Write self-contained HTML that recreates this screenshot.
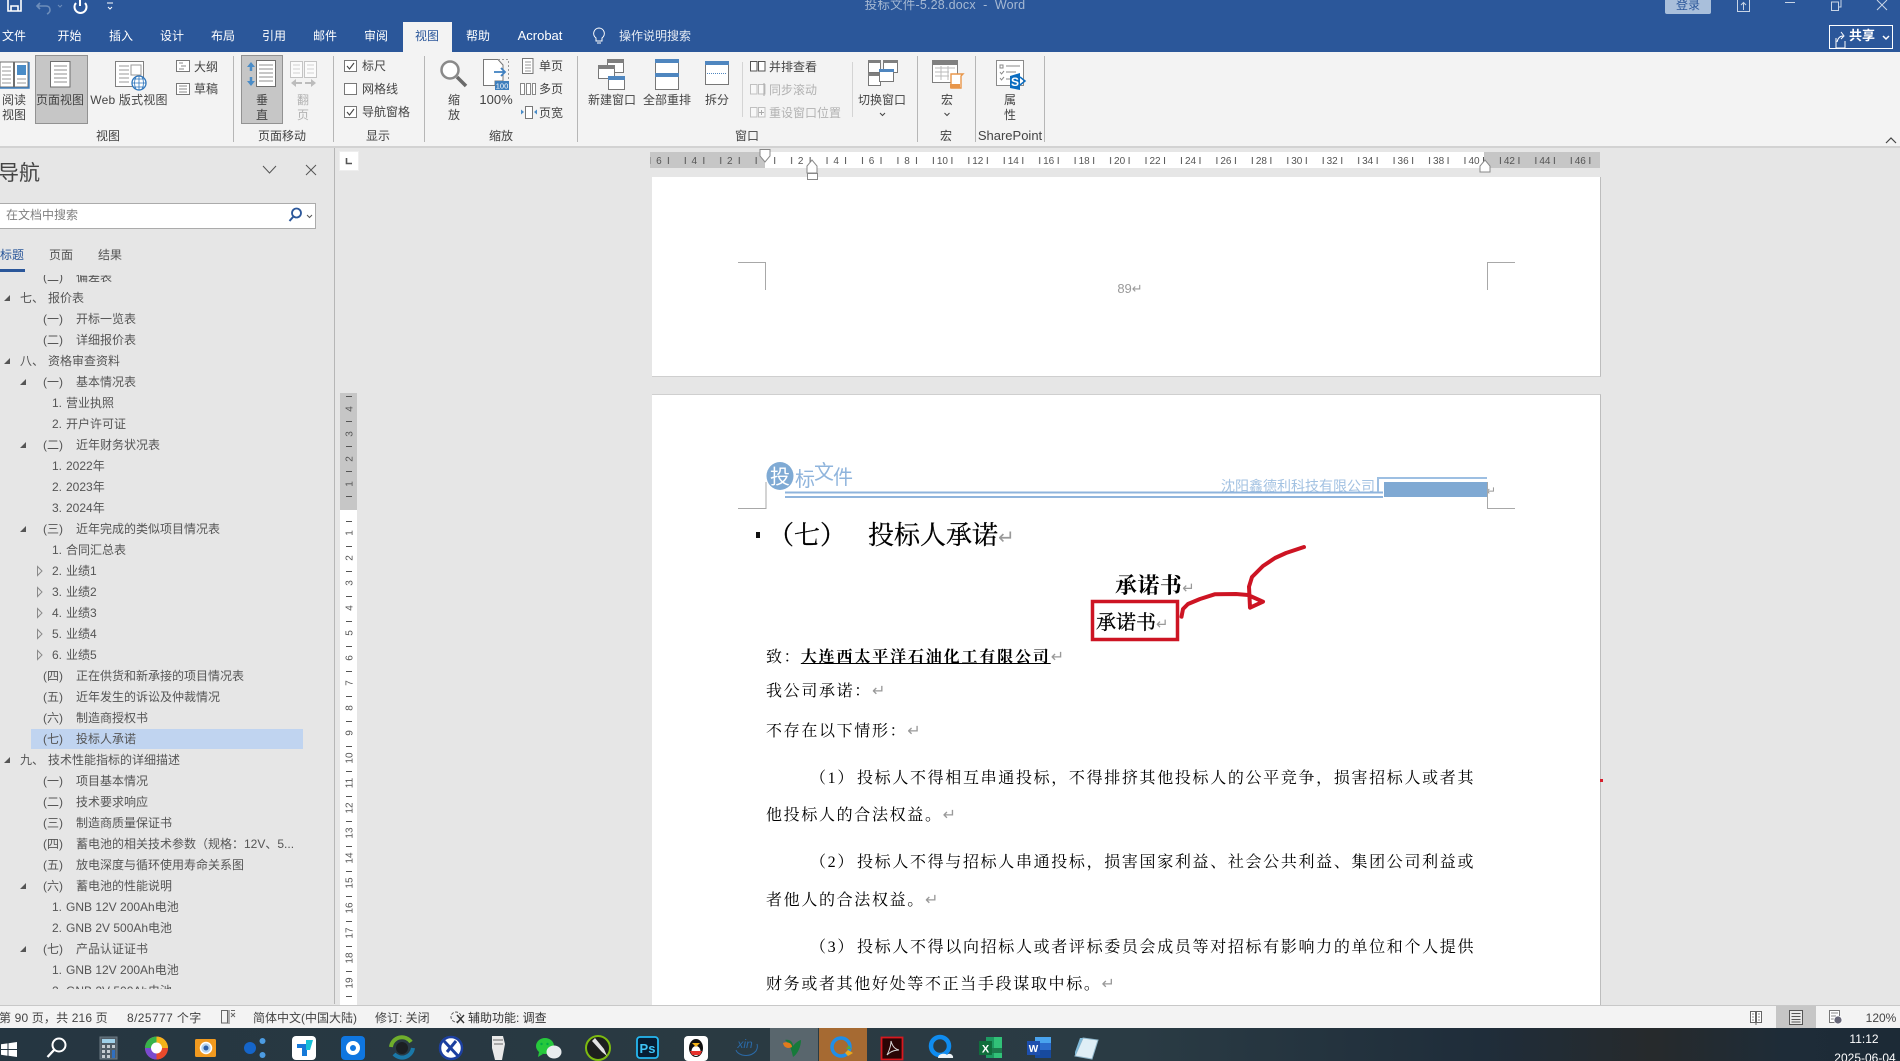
<!DOCTYPE html>
<html lang="zh"><head><meta charset="utf-8"><title>投标文件-5.28.docx - Word</title>
<style>
html,body{margin:0;padding:0;background:#e6e6e6}
#w{position:relative;width:1900px;height:1061px;overflow:hidden;background:#e6e6e6;font:12px/16px "Liberation Sans","Noto Sans CJK SC",sans-serif;color:#444}
.box{position:absolute}
.c,.l{position:absolute;white-space:nowrap}
.c{transform:translate(-50%,-50%)}
.l{transform:translateY(-50%)}
.tab{color:#fff}
.g{color:#b2b2b2}
.n{position:absolute;left:0;top:calc(1.7px + 21px*var(--k));height:0;color:#555}
.n b{position:absolute;font-weight:400;white-space:nowrap;transform:translateY(-50%)}
.s{font-family:"Liberation Serif","Noto Serif CJK SC",serif;color:#000;letter-spacing:1.66px;font-size:16px;line-height:20px}
svg{position:absolute;left:0;top:0}
.ret{color:#999;font:16px/14px "DejaVu Sans",sans-serif;letter-spacing:0}
</style></head><body><div id="w">

<!-- title + tabs -->
<div class="box" style="left:0;top:0;width:1900px;height:52px;background:#2b579a"></div>
<div class="box" style="left:403px;top:22px;width:49px;height:30px;background:#f3f3f3"></div>
<div class="box" style="left:0;top:52px;width:1900px;height:94px;background:#f3f3f3"></div>
<div class="box" style="left:0;top:146px;width:1900px;height:2px;background:#d2d2d2"></div>
<div class="box" style="left:1665px;top:0;width:46px;height:14px;background:#a9bfdb;border-radius:0 0 2px 2px"></div>
<div class="box" style="left:1829px;top:25px;width:62px;height:22px;border:1px solid #fff"></div>

<!-- selected ribbon buttons -->
<div class="box" style="left:35px;top:55px;width:51px;height:67px;background:#c6c6c6;border:1px solid #929292"></div>
<div class="box" style="left:241px;top:55px;width:40px;height:67px;background:#c6c6c6;border:1px solid #929292"></div>

<!-- nav pane -->
<div class="box" style="left:334px;top:148px;width:1px;height:856px;background:#b6b6b6"></div>
<div class="box" style="left:-2px;top:203px;width:316px;height:24px;background:#fff;border:1px solid #ababab"></div>
<div class="box" style="left:0;top:269px;width:25px;height:3px;background:#2b579a"></div>

<!-- rulers -->
<div class="box" style="left:340px;top:152px;width:18px;height:18px;background:#fff;box-shadow:0 0 0 1px #eee"></div>
<div class="box" style="left:650px;top:152px;width:950px;height:16px;background:#c6c6c6"></div>
<div class="box" style="left:765px;top:152px;width:719px;height:16px;background:#fff"></div>
<div class="box" style="left:340px;top:393px;width:17px;height:613px;background:#fff"></div>
<div class="box" style="left:340px;top:393px;width:17px;height:117px;background:#c6c6c6"></div>

<!-- pages -->
<div class="box" style="left:652px;top:177px;width:948px;height:199px;background:#fff;border-right:1px solid #bdbdbd;border-bottom:1px solid #cfcfcf"></div>
<div class="box" style="left:652px;top:394px;width:948px;height:612px;background:#fff;border-right:1px solid #bdbdbd;border-top:1px solid #cfcfcf"></div>
<div class="box" style="left:1600px;top:779px;width:3px;height:3px;background:#d81e2c"></div>

<!-- status + taskbar -->
<div class="box" style="left:0;top:1005px;width:1900px;height:1px;background:#c8c8c8"></div>
<div class="box" style="left:0;top:1006px;width:1900px;height:22px;background:#f3f3f3"></div>
<div class="box" style="left:1776px;top:1006px;width:40px;height:22px;background:#c6c6c6"></div>
<div class="box" style="left:0;top:1028px;width:1900px;height:33px;background:linear-gradient(90deg,#253641 0,#2a3a42 40%,#2a3b44 60%,#1f2d3a 78%,#262a2c 87%,#1e2c38 94%,#1c2a36 100%)"></div>
<div class="box" style="left:770px;top:1028px;width:48px;height:33px;background:#59666d"></div>
<div class="box" style="left:819px;top:1028px;width:48px;height:33px;background:#a66a32"></div>

<!-- nav tree highlight -->
<div class="box" style="left:31px;top:729px;width:272px;height:20px;background:#c0d4f0"></div>

<!-- tab labels -->
<span class="c tab" style="left:14px;top:36px">文件</span>
<span class="c tab" style="left:69.500px;top:36px">开始</span>
<span class="c tab" style="left:121px;top:36px">插入</span>
<span class="c tab" style="left:172px;top:36px">设计</span>
<span class="c tab" style="left:223px;top:36px">布局</span>
<span class="c tab" style="left:274px;top:36px">引用</span>
<span class="c tab" style="left:325px;top:36px">邮件</span>
<span class="c tab" style="left:376px;top:36px">审阅</span>
<span class="c" style="left:427px;top:36px;color:#2b579a">视图</span>
<span class="c tab" style="left:478px;top:36px">帮助</span>
<span class="c tab" style="left:540px;top:36px;font-size:13px">Acrobat</span>
<span class="l tab" style="left:619px;top:36px;color:#e4eaf3">操作说明搜索</span>
<span class="c" style="left:945px;top:5px;color:#a6b9d3;font-size:12.500px;letter-spacing:.2px">投标文件-5.28.docx &nbsp;-&nbsp; Word</span>
<span class="c" style="left:1688px;top:5px;color:#2b579a">登录</span>
<span class="c" style="left:1862px;top:36px;color:#fff;font-weight:700;font-size:13px">共享</span>

<!-- ribbon labels -->
<span class="c" style="left:14px;top:100px">阅读</span><span class="c" style="left:14px;top:115px">视图</span>
<span class="c" style="left:60px;top:100px">页面视图</span>
<span class="c" style="left:129px;top:100px;letter-spacing:.2px">Web 版式视图</span>
<span class="l" style="left:194px;top:67px">大纲</span><span class="l" style="left:194px;top:89px">草稿</span>
<span class="c" style="left:262px;top:100px">垂</span><span class="c" style="left:262px;top:115px">直</span>
<span class="c g" style="left:303px;top:100px">翻</span><span class="c g" style="left:303px;top:115px">页</span>
<span class="l" style="left:362px;top:66px">标尺</span><span class="l" style="left:362px;top:89px">网格线</span><span class="l" style="left:362px;top:112px">导航窗格</span>
<span class="c" style="left:454px;top:100px">缩</span><span class="c" style="left:454px;top:115px">放</span>
<span class="c" style="left:496px;top:100px;font-size:13px">100%</span>
<span class="l" style="left:539px;top:66px">单页</span><span class="l" style="left:539px;top:89px">多页</span><span class="l" style="left:539px;top:113px">页宽</span>
<span class="c" style="left:612px;top:100px">新建窗口</span>
<span class="c" style="left:667px;top:100px">全部重排</span>
<span class="c" style="left:717px;top:100px">拆分</span>
<span class="l" style="left:769px;top:67px">并排查看</span>
<span class="l g" style="left:769px;top:90px">同步滚动</span>
<span class="l g" style="left:769px;top:113px">重设窗口位置</span>
<span class="c" style="left:882px;top:100px">切换窗口</span>
<span class="c" style="left:947px;top:100px">宏</span>
<span class="c" style="left:1010px;top:100px">属</span><span class="c" style="left:1010px;top:115px">性</span>
<span class="c" style="left:108px;top:136px">视图</span>
<span class="c" style="left:282px;top:136px">页面移动</span>
<span class="c" style="left:378px;top:136px">显示</span>
<span class="c" style="left:501px;top:136px">缩放</span>
<span class="c" style="left:747px;top:136px">窗口</span>
<span class="c" style="left:946px;top:136px">宏</span>
<span class="c" style="left:1010px;top:136px;font-size:13px">SharePoint</span>

<!-- nav head -->
<span class="l" style="left:-2px;top:174px;font-size:21px;line-height:24px;color:#444">导航</span>
<span class="l" style="left:6px;top:215px;color:#808080">在文档中搜索</span>
<span class="l" style="left:0;top:255px;color:#2b579a">标题</span>
<span class="l" style="left:49px;top:255px;color:#555">页面</span>
<span class="l" style="left:98px;top:255px;color:#555">结果</span>

<!-- tree -->
<div class="box" style="left:0;top:275px;width:334px;height:714px;overflow:hidden">
<div class="n" style="--k:0"><b style="left:43px">(二)</b><b style="left:76px">偏差表</b></div>
<div class="n" style="--k:1"><b style="left:20px">七、</b><b style="left:48px">报价表</b></div>
<div class="n" style="--k:2"><b style="left:43px">(一)</b><b style="left:76px">开标一览表</b></div>
<div class="n" style="--k:3"><b style="left:43px">(二)</b><b style="left:76px">详细报价表</b></div>
<div class="n" style="--k:4"><b style="left:20px">八、</b><b style="left:48px">资格审查资料</b></div>
<div class="n" style="--k:5"><b style="left:43px">(一)</b><b style="left:76px">基本情况表</b></div>
<div class="n" style="--k:6"><b style="left:52px">1.</b><b style="left:66px">营业执照</b></div>
<div class="n" style="--k:7"><b style="left:52px">2.</b><b style="left:66px">开户许可证</b></div>
<div class="n" style="--k:8"><b style="left:43px">(二)</b><b style="left:76px">近年财务状况表</b></div>
<div class="n" style="--k:9"><b style="left:52px">1.</b><b style="left:66px">2022年</b></div>
<div class="n" style="--k:10"><b style="left:52px">2.</b><b style="left:66px">2023年</b></div>
<div class="n" style="--k:11"><b style="left:52px">3.</b><b style="left:66px">2024年</b></div>
<div class="n" style="--k:12"><b style="left:43px">(三)</b><b style="left:76px">近年完成的类似项目情况表</b></div>
<div class="n" style="--k:13"><b style="left:52px">1.</b><b style="left:66px">合同汇总表</b></div>
<div class="n" style="--k:14"><b style="left:52px">2.</b><b style="left:66px">业绩1</b></div>
<div class="n" style="--k:15"><b style="left:52px">3.</b><b style="left:66px">业绩2</b></div>
<div class="n" style="--k:16"><b style="left:52px">4.</b><b style="left:66px">业绩3</b></div>
<div class="n" style="--k:17"><b style="left:52px">5.</b><b style="left:66px">业绩4</b></div>
<div class="n" style="--k:18"><b style="left:52px">6.</b><b style="left:66px">业绩5</b></div>
<div class="n" style="--k:19"><b style="left:43px">(四)</b><b style="left:76px">正在供货和新承接的项目情况表</b></div>
<div class="n" style="--k:20"><b style="left:43px">(五)</b><b style="left:76px">近年发生的诉讼及仲裁情况</b></div>
<div class="n" style="--k:21"><b style="left:43px">(六)</b><b style="left:76px">制造商授权书</b></div>
<div class="n" style="--k:22"><b style="left:43px">(七)</b><b style="left:76px">投标人承诺</b></div>
<div class="n" style="--k:23"><b style="left:20px">九、</b><b style="left:48px">技术性能指标的详细描述</b></div>
<div class="n" style="--k:24"><b style="left:43px">(一)</b><b style="left:76px">项目基本情况</b></div>
<div class="n" style="--k:25"><b style="left:43px">(二)</b><b style="left:76px">技术要求响应</b></div>
<div class="n" style="--k:26"><b style="left:43px">(三)</b><b style="left:76px">制造商质量保证书</b></div>
<div class="n" style="--k:27"><b style="left:43px">(四)</b><b style="left:76px">蓄电池的相关技术参数（规格：12V、5...</b></div>
<div class="n" style="--k:28"><b style="left:43px">(五)</b><b style="left:76px">放电深度与循环使用寿命关系图</b></div>
<div class="n" style="--k:29"><b style="left:43px">(六)</b><b style="left:76px">蓄电池的性能说明</b></div>
<div class="n" style="--k:30"><b style="left:52px">1.</b><b style="left:66px">GNB 12V 200Ah电池</b></div>
<div class="n" style="--k:31"><b style="left:52px">2.</b><b style="left:66px">GNB 2V 500Ah电池</b></div>
<div class="n" style="--k:32"><b style="left:43px">(七)</b><b style="left:76px">产品认证证书</b></div>
<div class="n" style="--k:33"><b style="left:52px">1.</b><b style="left:66px">GNB 12V 200Ah电池</b></div>
<div class="n" style="--k:34"><b style="left:52px">2.</b><b style="left:66px">GNB 2V 500Ah电池</b></div>
</div>

<!-- status text -->
<span class="l" style="left:-1px;top:1018px;letter-spacing:.15px">第 90 页，共 216 页</span>
<span class="l" style="left:127px;top:1018px;letter-spacing:.4px">8/25777 个字</span>
<span class="l" style="left:253px;top:1018px">简体中文(中国大陆)</span>
<span class="l" style="left:375px;top:1018px">修订: 关闭</span>
<span class="l" style="left:468px;top:1018px;color:#333">辅助功能: 调查</span>
<span class="c" style="left:1881px;top:1018px">120%</span>
<span class="c" style="left:1864px;top:1039px;color:#fff">11:12</span>
<span class="c" style="left:1865px;top:1058px;color:#fff">2025-06-04</span>

<!-- document text -->
<span class="c" style="left:1130px;top:289px;color:#9a9a9a;font-size:13px">89↵</span>
<span class="c" style="left:805px;top:480px;color:#8fb4dc;font-size:20px;line-height:24px">标</span>
<span class="c" style="left:824px;top:473px;color:#8fb4dc;font-size:20px;line-height:24px">文</span>
<span class="c" style="left:843px;top:478px;color:#8fb4dc;font-size:20px;line-height:24px">件</span>
<span class="l" style="left:1221px;top:486px;color:#a3c2e2;font-size:14px">沈阳鑫德利科技有限公司</span>
<span class="c ret" style="left:1491px;top:491px;font-size:12px">↵</span>

<span class="l s" style="left:768px;top:536px;font-size:26px;line-height:32px;letter-spacing:0;-webkit-text-stroke:.3px #000">（七）</span>
<span class="l s" style="left:868px;top:536px;font-size:26px;line-height:32px;letter-spacing:0;-webkit-text-stroke:.3px #000">投标人承诺<span class="ret" style="font-size:20px;-webkit-text-stroke:0">↵</span></span>
<span class="l s" style="left:1115px;top:586px;font-size:22px;line-height:28px;letter-spacing:.4px;font-weight:700">承诺书<span class="ret" style="font-weight:400;font-size:15px">↵</span></span>
<span class="l s" style="left:1096px;top:623px;font-size:20px;line-height:26px;letter-spacing:0;-webkit-text-stroke:.3px #000">承诺书<span class="ret" style="font-size:15px;-webkit-text-stroke:0">↵</span></span>

<span class="l s" style="left:766px;top:658px">致：<span style="font-weight:700;text-decoration:underline;margin-left:-.5px;letter-spacing:1.85px">大连西太平洋石油化工有限公司</span><span class="ret">↵</span></span>
<span class="l s" style="left:766px;top:692px">我公司承诺：<span class="ret">↵</span></span>
<span class="l s" style="left:766px;top:732px">不存在以下情形：<span class="ret">↵</span></span>
<span class="l s" style="left:810px;top:778.500px">（1）</span>
<span class="l s" style="left:857px;top:778.500px">投标人不得相互串通投标，不得排挤其他投标人的公平竞争，损害招标人或者其</span>
<span class="l s" style="left:766px;top:816px">他投标人的合法权益。<span class="ret">↵</span></span>
<span class="l s" style="left:810px;top:863px">（2）</span>
<span class="l s" style="left:857px;top:863px">投标人不得与招标人串通投标，损害国家利益、社会公共利益、集团公司利益或</span>
<span class="l s" style="left:766px;top:901px">者他人的合法权益。<span class="ret">↵</span></span>
<span class="l s" style="left:810px;top:948px">（3）</span>
<span class="l s" style="left:857px;top:948px">投标人不得以向招标人或者评标委员会成员等对招标有影响力的单位和个人提供</span>
<span class="l s" style="left:766px;top:985px">财务或者其他好处等不正当手段谋取中标。<span class="ret">↵</span></span>

<!-- all vector artwork -->
<svg width="1900" height="1061" viewBox="0 0 1900 1061" fill="none">
<defs>
<pattern id="ht" patternUnits="userSpaceOnUse" x="765.2" y="157" width="35.44" height="7"><rect x="9" width="1" height="7" fill="#555"/><rect x="25.9" width="1" height="7" fill="#555"/></pattern>
<pattern id="vt" patternUnits="userSpaceOnUse" x="346" y="521" width="6" height="25"><rect width="6" height="1" fill="#555"/></pattern>
</defs>

<!-- QAT -->
<path d="M8 0V11H21V0M11 11V6H18V11" stroke="#fff" stroke-width="1.6"/>
<path d="M40 3l-3 3 3 3M37 6h9c3 0 4 2 4 4s-1 3-3 4" stroke="#6d8dba" stroke-width="1.6"/>
<path d="M58 5l2 2 2-2" stroke="#6d8dba"/>
<path d="M76 3a6 6 0 1 0 9 0M80 0v6" stroke="#fff" stroke-width="2"/>
<path d="M107 3h6M108 7l2 2 2-2" stroke="#fff"/>

<!-- bulb -->
<path d="M599 28a5.5 5.5 0 0 1 3 10v3h-6v-3a5.5 5.5 0 0 1 3-10zM597 43h4" stroke="#fff"/>

<!-- window controls -->
<path d="M1737.500 0V11.500H1749.500V0M1743.500 10V3M1741 5l2.500-2.500 2.500 2.500" stroke="#c9d5e6"/>
<path d="M1785 2.500H1795" stroke="#c9d5e6"/>
<path d="M1831.500 2V10.500H1838.500V2zM1838.500 7H1841V0" stroke="#c9d5e6"/>
<path d="M1877 0L1887 10M1887 0L1877 10" stroke="#c9d5e6"/>

<!-- share icon + caret -->
<path d="M1836 38V48H1845V41M1837 42c1-4 3-6 6-6M1841 32l3 4-3 3" stroke="#fff"/>
<path d="M1883 36l3 3 3-3" stroke="#fff" stroke-width="1.5"/>

<!-- read view -->
<path d="M0 62H13.500V87H0z" fill="#fff" stroke="#6f6f6f"/>
<path d="M14.500 62H28V87H14.500z" fill="#fff" stroke="#6f6f6f"/>
<path d="M29 62V88H0" stroke="#3f80c0" stroke-width="1.4"/>
<path d="M2 67H11M2 71H11M2 75H11M2 79H11M2 83H11M17 79H26M17 83H26" stroke="#9a9a9a"/>
<rect x="17" y="65" width="9" height="10" fill="#4a8cc7"/>

<!-- print view -->
<rect x="50.500" y="61.500" width="19.500" height="25.500" fill="#fff" stroke="#6f6f6f"/>
<path d="M54 66H67M54 70H67M54 74H67M54 78H67M54 82H67" stroke="#8f8f8f"/>

<!-- web view -->
<rect x="115.500" y="61.500" width="28" height="25" fill="#fff" stroke="#7f7f7f"/>
<path d="M119 66H129M119 70H129M119 74H129M119 78H129M119 82H129" stroke="#999"/>
<rect x="131" y="65" width="10" height="10" fill="#fff" stroke="#999"/>
<circle cx="139" cy="83" r="7" fill="#fff" stroke="#2f76bc" stroke-width="1.3"/>
<path d="M132 83H146M139 76V90M134 79H144M134 87H144M136 77c-2 4-2 8 0 12M142 77c2 4 2 8 0 12" stroke="#2f76bc" stroke-width=".8"/>

<!-- outline/draft -->
<rect x="176.500" y="60.500" width="13" height="11" fill="#fff" stroke="#777"/>
<path d="M179 63H183M181 66H186M179 69H184" stroke="#888"/>
<rect x="176.500" y="83.500" width="13" height="11" fill="#fff" stroke="#777"/>
<path d="M179 86H187M179 89H187M179 92H187" stroke="#888"/>

<!-- vertical -->
<rect x="256.500" y="60.500" width="19" height="26" fill="#fff" stroke="#6f6f6f"/>
<path d="M259 65H273M259 69H273M259 73H273M259 77H273M259 81H273" stroke="#8f8f8f"/>
<path d="M251 64V71M251 77V84" stroke="#4a8cc7" stroke-width="2.500"/>
<path d="M247 67l4-5 4 5zM247 81l4 5 4-5z" fill="#4a8cc7"/>

<!-- flip pages -->
<rect x="290.500" y="61.500" width="12" height="16" fill="#fbfbfb" stroke="#c4c4c4"/>
<rect x="304.500" y="61.500" width="12" height="16" fill="#fbfbfb" stroke="#c4c4c4"/>
<path d="M293 65H300M293 69H300M293 73H300M307 65H314M307 69H314M307 73H314" stroke="#d2d2d2"/>
<path d="M294 83H302M305 83H313" stroke="#bcbcbc" stroke-width="2"/>
<path d="M291 83l5-4v8zM316 83l-5-4v8z" fill="#bcbcbc"/>

<!-- checkboxes -->
<rect x="344.500" y="60.500" width="12" height="11" fill="#fff" stroke="#777"/>
<path d="M347 66l2.500 3 4.500-6" stroke="#444" stroke-width="1.1"/>
<rect x="344.500" y="83.500" width="12" height="11" fill="#fff" stroke="#777"/>
<rect x="344.500" y="106.500" width="12" height="11" fill="#fff" stroke="#777"/>
<path d="M347 112l2.500 3 4.500-6" stroke="#444" stroke-width="1.1"/>

<!-- zoom -->
<circle cx="450" cy="70" r="8.500" fill="#fff" stroke="#8a8a8a" stroke-width="2.500"/>
<path d="M457 77L466 86" stroke="#6a6a6a" stroke-width="3.500"/>

<!-- 100% -->
<path d="M483.500 59.500H498L503 65V81H495V85.500H483.500z" fill="#fff" stroke="#777"/>
<path d="M498 59.500H508.500V80" stroke="#999" stroke-dasharray="2 2"/>
<path d="M494 72H504M501 68l4 4-4 4" stroke="#3f80c0" stroke-width="1.8"/>
<rect x="495" y="81" width="14" height="9" fill="#3f7fbc"/>
<text x="502" y="88.500" fill="#fff" font-family="Liberation Sans" font-size="7.500" text-anchor="middle">100</text>

<!-- page types -->
<rect x="522.500" y="58.500" width="10.500" height="15" fill="#fff" stroke="#777"/>
<path d="M525 62H531M525 65H531M525 68H531M525 71H531" stroke="#999"/>
<rect x="520.500" y="83.500" width="4" height="11" fill="#fff" stroke="#888"/>
<rect x="526.500" y="83.500" width="4" height="11" fill="#fff" stroke="#888"/>
<rect x="532.500" y="83.500" width="3" height="11" fill="#fff" stroke="#888"/>
<rect x="525.500" y="106.500" width="7" height="12" fill="#fff" stroke="#777"/>
<path d="M524 112l-3-2.500v5zM534 112l3-2.500v5z" fill="#4a8cc7"/>

<!-- new window -->
<rect x="607.500" y="59.500" width="16" height="13" fill="#fff" stroke="#777"/><rect x="607" y="59" width="17" height="4" fill="#7f7f7f"/>
<rect x="598.500" y="65.500" width="16" height="13" fill="#fff" stroke="#777"/><rect x="598" y="65" width="17" height="4" fill="#7f7f7f"/>
<rect x="608.500" y="76.500" width="16" height="13" fill="#fff" stroke="#777"/><rect x="608" y="76" width="17" height="4" fill="#4f86bf"/>

<!-- arrange all -->
<rect x="655.500" y="59.500" width="23" height="30" fill="#fff" stroke="#777"/>
<rect x="655" y="59" width="24" height="4" fill="#4f86bf"/><rect x="655" y="73" width="24" height="4" fill="#4f86bf"/>

<!-- split -->
<rect x="705.500" y="61.500" width="23" height="23" fill="#fff" stroke="#777"/>
<rect x="705" y="61" width="24" height="4" fill="#4f86bf"/>
<path d="M707 73.500H727" stroke="#4f86bf" stroke-dasharray="1 1"/>

<!-- separators -->
<path d="M233.500 56V142M333.500 56V142M424.500 56V142M577.500 56V142M917.500 56V142M975.500 56V142M1044.500 56V142" stroke="#b6b6b6"/>
<path d="M742.500 62V117M852.500 62V117" stroke="#d4d4d4"/>

<!-- side by side -->
<path d="M750.500 61.500H757V71H750.500zM758.500 61.500H765V71H758.500z" fill="#fff" stroke="#555"/>
<path d="M750.500 84.500H757V94H750.500zM758.500 84.500H765V94H758.500z" fill="#f8f8f8" stroke="#c0c0c0"/>
<path d="M764 83V96" stroke="#aaa"/>
<path d="M750.500 107.500H757V117H750.500zM758.500 107.500H765V117H758.500z" fill="#f8f8f8" stroke="#c0c0c0"/>
<path d="M761.500 110V115M759 112.500H764" stroke="#aaa"/>

<!-- switch windows -->
<rect x="868.500" y="60.500" width="12" height="12" fill="#fff" stroke="#777"/><rect x="868" y="60" width="13" height="3" fill="#7f7f7f"/>
<rect x="883.500" y="60.500" width="14" height="12" fill="#fff" stroke="#777"/><rect x="883" y="60" width="15" height="3" fill="#7f7f7f"/>
<rect x="868.500" y="73.500" width="12" height="12" fill="#fff" stroke="#777"/><rect x="868" y="73" width="13" height="3" fill="#7f7f7f"/>
<rect x="879.500" y="69.500" width="14" height="12" fill="#fff" stroke="#777"/><rect x="879" y="69" width="15" height="3" fill="#4f86bf"/>
<path d="M880 113l2.500 2.500 2.500-2.500" stroke="#444"/>

<!-- macro -->
<rect x="932.500" y="60.500" width="25" height="22" fill="#fff" stroke="#7f7f7f"/>
<rect x="932" y="60" width="26" height="5" fill="#808080"/>
<path d="M935 68H955M935 72H949M935 76H949M941 66V80M948 66V80" stroke="#bbb"/>
<path d="M951 74H963L961 76V88H951z" fill="#fff" stroke="#e8964a" stroke-width="1.4"/>
<rect x="950" y="84" width="10" height="4" fill="#e8964a"/>
<path d="M944.500 113l2.500 2.500 2.500-2.500" stroke="#444"/>

<!-- properties -->
<rect x="996.500" y="60.500" width="27" height="25" fill="#fff" stroke="#8a8a8a"/>
<rect x="1000" y="65" width="3" height="3" stroke="#888"/>
<path d="M1006 66H1020M1006 72H1016M1006 79H1014M1000 72l1.500 2 2.500-3M1000 78l1.500 2 2.500-3" stroke="#8a8a8a"/>
<path d="M1010 76L1020 73V90L1010 88z" fill="#0a6cc0"/>
<path d="M1020 77l5 4-5 4" stroke="#0a6cc0" stroke-width="1.500"/>
<text x="1015" y="86" fill="#fff" font-family="Liberation Sans" font-size="12" font-weight="700" text-anchor="middle">S</text>

<!-- collapse -->
<path d="M1886 143l5-5 5 5" stroke="#444" stroke-width="1.2"/>

<!-- nav icons -->
<path d="M263 166l6.500 7 6.500-7M306 165l10 10M316 165l-10 10" stroke="#555"/>
<circle cx="296.500" cy="213" r="4.500" stroke="#2b579a" stroke-width="1.800"/>
<path d="M293 217l-3.500 4" stroke="#2b579a" stroke-width="2"/>
<path d="M307 215l2.500 2.500 2.500-2.500" stroke="#555"/>

<!-- tree arrows -->
<path d="M4 301L10 295V301zM4 364L10 358V364zM20 385L26 379V385zM20 448L26 442V448zM20 532L26 526V532zM4 763L10 757V763zM20 889L26 883V889zM20 952L26 946V952z" fill="#555"/>
<path d="M37.500 566.500L42 571L37.500 575.500zM37.500 587.500L42 592L37.500 596.500zM37.500 608.500L42 613L37.500 617.500zM37.500 629.500L42 634L37.500 638.500zM37.500 650.500L42 655L37.500 659.500z" stroke="#8a8a8a"/>

<!-- tab-stop L -->
<path d="M346.500 158V163.500H352" stroke="#555" stroke-width="1.6"/>

<!-- h-ruler -->
<rect x="650" y="157" width="950" height="7" fill="url(#ht)"/>
<g font-family="Liberation Sans" font-size="10" fill="#555" text-anchor="middle">
<text x="658.900" y="164">6</text><text x="694.300" y="164">4</text><text x="729.800" y="164">2</text>
<text x="800.600" y="164">2</text><text x="836.100" y="164">4</text><text x="871.500" y="164">6</text><text x="907" y="164">8</text>
<text x="942.400" y="164">10</text><text x="977.800" y="164">12</text><text x="1013.300" y="164">14</text><text x="1048.700" y="164">16</text>
<text x="1084.200" y="164">18</text><text x="1119.600" y="164">20</text><text x="1155" y="164">22</text><text x="1190.500" y="164">24</text>
<text x="1225.900" y="164">26</text><text x="1261.400" y="164">28</text><text x="1296.800" y="164">30</text><text x="1332.200" y="164">32</text>
<text x="1367.700" y="164">34</text><text x="1403.100" y="164">36</text><text x="1438.600" y="164">38</text><text x="1474" y="164">40</text>
<text x="1509.400" y="164">42</text><text x="1544.900" y="164">44</text><text x="1580.300" y="164">46</text>
</g>
<!-- ruler markers -->
<path d="M760 149.500H770V156L765 162L760 156z" fill="#fff" stroke="#888"/>
<path d="M807 166V173H817V166L812 160z" fill="#fff" stroke="#888"/>
<rect x="807.500" y="173.500" width="10" height="6" fill="#fff" stroke="#888"/>
<path d="M1480 172V166L1485 160L1490 166V172z" fill="#fff" stroke="#888"/>

<!-- v-ruler -->
<rect x="346" y="396" width="6" height="610" fill="url(#vt)"/>
<g font-family="Liberation Sans" font-size="10" fill="#555" text-anchor="middle">
<text transform="translate(352.500 409) rotate(-90)">4</text><text transform="translate(352.500 434) rotate(-90)">3</text>
<text transform="translate(352.500 459) rotate(-90)">2</text><text transform="translate(352.500 484) rotate(-90)">1</text>
<text transform="translate(352.500 533) rotate(-90)">1</text><text transform="translate(352.500 558) rotate(-90)">2</text>
<text transform="translate(352.500 583) rotate(-90)">3</text><text transform="translate(352.500 608) rotate(-90)">4</text>
<text transform="translate(352.500 633) rotate(-90)">5</text><text transform="translate(352.500 658) rotate(-90)">6</text>
<text transform="translate(352.500 683) rotate(-90)">7</text><text transform="translate(352.500 708) rotate(-90)">8</text>
<text transform="translate(352.500 733) rotate(-90)">9</text><text transform="translate(352.500 758) rotate(-90)">10</text>
<text transform="translate(352.500 783) rotate(-90)">11</text><text transform="translate(352.500 808) rotate(-90)">12</text>
<text transform="translate(352.500 833) rotate(-90)">13</text><text transform="translate(352.500 858) rotate(-90)">14</text>
<text transform="translate(352.500 883) rotate(-90)">15</text><text transform="translate(352.500 908) rotate(-90)">16</text>
<text transform="translate(352.500 933) rotate(-90)">17</text><text transform="translate(352.500 958) rotate(-90)">18</text>
<text transform="translate(352.500 983) rotate(-90)">19</text>
</g>

<!-- crop marks -->
<path d="M738 262.500H765.500V290M1515 262.500H1487.500V290M766 482V508.500H738M1487.500 482V508.500H1515" stroke="#a8a8a8"/>

<!-- header art -->
<ellipse cx="780" cy="476" rx="13.500" ry="14" fill="#7faad4"/>
<text x="780" y="483.500" fill="#fff" font-family="Noto Sans CJK SC" font-size="20" text-anchor="middle">投</text>
<path d="M785 492.500H1383M785 497H1383" stroke="#8fb4dc" stroke-width="2"/>
<path d="M1378 492V478H1487" stroke="#9dbfe2" stroke-width="2"/>
<rect x="1384" y="482" width="103" height="15" fill="#7fa9d3"/>

<!-- heading bullet -->
<rect x="756" y="532" width="4" height="6" fill="#111"/>

<!-- red markup -->
<rect x="1092.500" y="601.500" width="85" height="38" stroke="#cd1423" stroke-width="3.500"/>
<path d="M1181.500 616.700L1183 609L1188 604L1200 599L1214.700 594.300L1236 594L1248 595L1263 601.700L1250 607.700L1249 586.700L1252 577L1263 566L1275 558L1286 553L1304 547" stroke="#cd1423" stroke-width="4" stroke-linecap="round" stroke-linejoin="round"/>

<!-- status icons -->
<path d="M221.500 1010.500H227.500V1023H221.500zM229 1010V1024M231 1010.500H235" stroke="#666"/>
<path d="M231 1013l4 4M235 1013l-4 4" stroke="#666"/>
<circle cx="456" cy="1017" r="5" stroke="#555" stroke-dasharray="3 1.500"/>
<path d="M457 1015l7 8M464 1015l-7 8" stroke="#333" stroke-width="1.400"/>
<path d="M1750.500 1011.500H1755.500V1022.500H1750.500zM1756.500 1011.500H1761.500V1022.500H1756.500zM1756 1011V1025" fill="#fff" stroke="#666"/>
<path d="M1752 1014H1754M1752 1017H1754M1752 1020H1754M1758 1014H1760M1758 1017H1760M1758 1020H1760" stroke="#888"/>
<rect x="1789.500" y="1010.500" width="13" height="14" fill="#e8e8e8" stroke="#555"/>
<path d="M1791.500 1013.500H1800.500M1791.500 1016.500H1800.500M1791.500 1019.500H1800.500M1791.500 1022H1800.500" stroke="#555"/>
<rect x="1829.500" y="1010.500" width="10" height="12" fill="#fff" stroke="#777"/>
<path d="M1831 1013H1838M1831 1016H1836M1831 1019H1835" stroke="#888"/>
<circle cx="1838" cy="1020" r="4" fill="#667" stroke="#fff" stroke-width=".8"/>

<!-- taskbar -->
<path d="M1 1044.300L7.500 1043.400V1049H1zM8.500 1043.300L17 1042V1049H8.500zM1 1050H7.500V1055.700L1 1054.800zM8.500 1050H17V1057L8.500 1055.800z" fill="#fff"/>
<circle cx="59" cy="1045" r="6.500" stroke="#fff" stroke-width="2"/>
<path d="M54 1050L47.500 1057" stroke="#fff" stroke-width="2.300"/>

<rect x="100" y="1037" width="17" height="22" fill="#505d67" stroke="#6d7a84"/>
<rect x="102" y="1039" width="13" height="4" fill="#9fd0e8"/>
<path d="M102 1045H105V1048H102zM107 1045H110V1048H107zM112 1045H115V1048H112zM102 1050H105V1053H102zM107 1050H110V1053H107zM102 1055H105V1058H102zM107 1055H110V1058H107z" fill="#c4cbd0"/>
<rect x="112" y="1050" width="3" height="8" fill="#2f6fc0"/>

<circle cx="156.500" cy="1048" r="11.500" fill="#eb3b7a"/>
<path d="M156.500 1036.500A11.500 11.500 0 0 1 168 1048H156.500z" fill="#f4b41a"/>
<path d="M168 1048A11.500 11.500 0 0 1 156.500 1059.500V1048z" fill="#e94a2b"/>
<path d="M145 1048A11.500 11.500 0 0 1 156.500 1036.500V1048z" fill="#37b34a"/>
<path d="M156.500 1059.500A11.500 11.500 0 0 1 145 1048H156.500z" fill="#7a4bd0"/>
<circle cx="156.500" cy="1048" r="5.500" fill="#fff"/>

<rect x="195" y="1039" width="21" height="18" fill="#f19a1f" rx="1.500"/>
<circle cx="206" cy="1048" r="5.500" fill="#b7d4ee" stroke="#fff" stroke-width="1.500"/>
<circle cx="206" cy="1048" r="2.500" fill="#2d5fa8"/>

<circle cx="250" cy="1048" r="6" fill="#1565c9"/>
<circle cx="262.500" cy="1041" r="3" fill="#4c9ce2"/>
<circle cx="262.500" cy="1055" r="3" fill="#4c9ce2"/>

<rect x="292" y="1036" width="24" height="24" rx="4" fill="#fff"/>
<path d="M297 1044H307V1056H302V1048H297z" fill="#1679d9"/>
<path d="M306 1040H313L310 1050H306z" fill="#16c0d8"/>

<rect x="341" y="1036" width="24" height="24" rx="4" fill="#0f76e0"/>
<circle cx="353" cy="1048" r="7" fill="#fff"/>
<circle cx="353" cy="1048" r="3" fill="#0f76e0"/>

<path d="M391 1047a11 11 0 0 1 20-5" stroke="#6fae2c" stroke-width="4"/>
<path d="M413 1048a11 11 0 0 1-19 6" stroke="#1a78a8" stroke-width="4"/>
<circle cx="402" cy="1048" r="6" fill="#1b1f22"/>

<circle cx="451" cy="1048" r="12" fill="#fff"/>
<circle cx="451" cy="1048" r="11" stroke="#1c3fa0" stroke-width="2.500"/>
<path d="M444 1041L458 1056M447 1052L456 1041" stroke="#1c3fa0" stroke-width="3"/>

<path d="M492 1036H503L505 1044L502 1060H495L492 1048z" fill="#e9e9e9"/>
<path d="M493 1040H503M494 1044H503" stroke="#666"/>

<ellipse cx="545" cy="1046" rx="9" ry="8" fill="#26c83c"/>
<path d="M539 1052l-1 5 5-3z" fill="#26c83c"/>
<ellipse cx="554" cy="1052" rx="7.500" ry="6.500" fill="#e8ecee"/>
<circle cx="541.500" cy="1044" r="1.200" fill="#0a4"/><circle cx="547.500" cy="1044" r="1.200" fill="#0a4"/>

<circle cx="598" cy="1048" r="12" fill="#1d1f1e" stroke="#7dbb10" stroke-width="2"/>
<path d="M592 1041L602 1052L607 1056L604 1049L595 1038z" fill="#e3e3e3"/>

<rect x="637" y="1037" width="21" height="21" rx="3" fill="#071d33" stroke="#25b8f2" stroke-width="1.800"/>
<text x="647.500" y="1053" fill="#3fc3f7" font-family="Liberation Sans" font-size="13" font-weight="700" text-anchor="middle">Ps</text>

<rect x="684" y="1036" width="24" height="25" rx="4" fill="#fff"/>
<ellipse cx="696" cy="1048" rx="7" ry="9" fill="#111"/>
<ellipse cx="696" cy="1051" rx="4.500" ry="5" fill="#fff"/>
<path d="M690 1051H702L700 1055H692z" fill="#e5322c"/>
<path d="M692 1043H700L696 1047z" fill="#f4b41a"/>

<text x="745" y="1048" fill="#2a6aa8" font-family="Liberation Sans" font-size="12" font-style="italic" text-anchor="middle">xin</text>
<path d="M736 1050c2 6 14 8 20 1c1-2 2-4 1-7" stroke="#2a6aa8"/>

<path d="M785 1040c5-1 8 2 8 6c3-4 7-6 8-6c0 6-3 14-8 17c-1-5-3-13-8-17z" fill="#167a3a"/>
<path d="M783 1043c4-2 9 0 9 4c-4 2-8 1-9-4z" fill="#e27a1c"/>

<circle cx="841" cy="1047" r="9" stroke="#1f8ee8" stroke-width="3.500"/>
<path d="M848 1050l5 3-5 3-3-3z" fill="#e8a81c"/>
<path d="M846 1049l3-4 2 4z" fill="#5aa83b"/>

<rect x="881.500" y="1037.500" width="21" height="22" fill="#2a0505" stroke="#d8181f" stroke-width="1.800"/>
<path d="M887 1055c2-4 4-10 4-14c1 4 3 8 8 9c-3 0-8 1-12 5z" stroke="#d8d8d8"/>

<circle cx="940" cy="1046" r="9" stroke="#0f8cf0" stroke-width="4.500"/>
<path d="M938 1058c0-5 8-5 9-3c2-3 7 0 6 3z" fill="#eef3f6"/>

<rect x="986" y="1037" width="16" height="21" fill="#1e9a62"/>
<path d="M994 1037H1002V1058H994z" fill="#31c178"/>
<path d="M994 1048H1002V1053H994zM986 1048H994V1053H986z" fill="#1c7a4c"/>
<rect x="979" y="1041" width="13" height="14" fill="#106e3c"/>
<text x="985.500" y="1052.500" fill="#fff" font-family="Liberation Sans" font-size="11" font-weight="700" text-anchor="middle">X</text>

<rect x="1035" y="1037" width="16" height="21" fill="#2b6ccc"/>
<path d="M1035 1037H1051V1043H1035z" fill="#49a3ee"/>
<path d="M1035 1050H1051V1058H1035z" fill="#174a9e"/>
<rect x="1027" y="1041" width="13" height="14" fill="#1d4fae"/>
<text x="1033.500" y="1052" fill="#fff" font-family="Liberation Sans" font-size="10" font-weight="700" text-anchor="middle">W</text>

<path d="M1083 1038L1098 1040L1092 1059L1075 1056z" fill="#dfeef6" stroke="#8fb5c9"/>
<path d="M1075 1056L1083 1038L1080 1038L1075 1052z" fill="#7fb9d8"/>
</svg>
</div></body></html>
